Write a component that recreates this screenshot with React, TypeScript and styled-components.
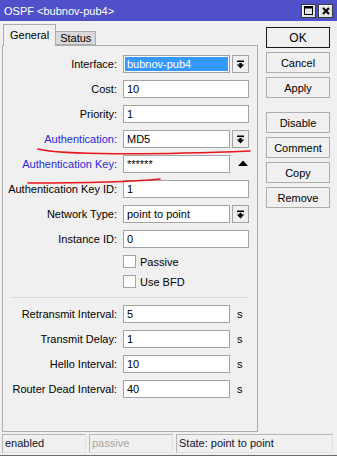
import React from 'react';
import styled, { createGlobalStyle } from 'styled-components';

const GlobalStyle = createGlobalStyle`
  html, body {
    margin: 0;
    padding: 0;
    background: #ffffff;
  }
  body {
    font-family: 'Liberation Sans', Arial, sans-serif;
    font-size: 11px;
    color: #000;
  }
`;

const Window = styled.div`
  position: relative;
  width: 337px;
  height: 455px;
  background: #f0f0f0;
  border-bottom: 1px solid #6b6b6b;
  display: flex;
  flex-direction: column;
`;

const TitleBar = styled.div`
  height: 21px;
  background: #5050c8;
  display: flex;
  align-items: center;
  padding: 0 4px;
  color: #ffffff;
  font-size: 11px;
  flex-shrink: 0;
`;

const TitleText = styled.span`
  line-height: 21px;
  padding-top: 1px;
`;

const TitleButtons = styled.div`
  margin-left: auto;
  display: flex;
  gap: 2px;
`;

const TitleButton = styled.div`
  width: 15px;
  height: 14px;
  box-sizing: border-box;
  background: #e4e4e4;
  border: 1px solid #3a3a3a;
  box-shadow: inset 1px 1px 0 #ffffff;
  display: flex;
  align-items: center;
  justify-content: center;
`;

const Body = styled.div`
  flex: 1;
  display: flex;
  min-height: 0;
`;

const LeftColumn = styled.div`
  display: flex;
  flex-direction: column;
  padding: 3px 0 1px 2px;
  width: 256px;
`;

const TabStrip = styled.div`
  display: flex;
  align-items: flex-end;
  height: 21px;
  margin-left: 1px;
`;

const Tab = styled.div<{ $active: boolean }>`
  box-sizing: border-box;
  height: ${({ $active }) => ($active ? '22px' : '14px')};
  margin-bottom: ${({ $active }) => ($active ? '-1px' : '0')};
  padding: 0 ${({ $active }) => ($active ? '6px' : '4px')};
  background: ${({ $active }) => ($active ? '#f0f0f0' : '#d9d9d9')};
  border: 1px solid #adadad;
  border-bottom: ${({ $active }) => ($active ? 'none' : '1px solid #adadad')};
  border-left: ${({ $active }) => ($active ? '1px solid #adadad' : 'none')};
  position: relative;
  z-index: 1;
  display: flex;
  align-items: center;
  line-height: 12px;
  padding-bottom: ${({ $active }) => ($active ? '2px' : '0')};
`;

const Panel = styled.div`
  flex: 1;
  box-sizing: border-box;
  border: 1px solid #adadad;
  padding: 9px 8px 0 0;
  display: flex;
  flex-direction: column;
`;

const FieldGrid = styled.div`
  display: grid;
  grid-template-columns: 115px 1fr;
  column-gap: 5px;
  row-gap: 7px;
  grid-auto-rows: 18px;
`;

const Label = styled.div<{ $blue?: boolean }>`
  text-align: right;
  padding-right: 1px;
  line-height: 18px;
  white-space: nowrap;
  color: ${({ $blue }) => ($blue ? '#2a2ad8' : '#000000')};
`;

const FieldRow = styled.div`
  display: flex;
  align-items: center;
  gap: 2px;
`;

const Input = styled.div<{ $selected?: boolean }>`
  flex: 1;
  height: 18px;
  box-sizing: border-box;
  border: 1px solid #a3a3a3;
  background: #ffffff;
  padding: 1px;
  display: flex;
`;

const InputText = styled.span<{ $selected?: boolean }>`
  flex: 1;
  padding-left: 2px;
  line-height: 14px;
  background: ${({ $selected }) => ($selected ? '#3399ff' : 'transparent')};
  color: ${({ $selected }) => ($selected ? '#ffffff' : '#000000')};
  white-space: nowrap;
  overflow: hidden;
`;

const DropButton = styled.div`
  width: 17px;
  height: 18px;
  box-sizing: border-box;
  border: 1px solid #a3a3a3;
  background: #f0f0f0;
  display: flex;
  align-items: center;
  justify-content: center;
`;

const PlainArrow = styled.div`
  width: 17px;
  height: 18px;
  display: flex;
  align-items: center;
  justify-content: center;
  padding-left: 4px;
  padding-bottom: 3px;
  box-sizing: border-box;
`;

const Unit = styled.span`
  width: 12px;
  padding-left: 5px;
  line-height: 18px;
`;

const CheckList = styled.div`
  display: flex;
  flex-direction: column;
  gap: 7px;
  margin-top: 7px;
  padding-left: 120px;
`;

const CheckRow = styled.label`
  display: flex;
  align-items: center;
  gap: 4px;
  height: 13px;
`;

const CheckBox = styled.span`
  width: 13px;
  height: 13px;
  box-sizing: border-box;
  border: 1px solid #a3a3a3;
  background: #ffffff;
`;

const Separator = styled.div`
  height: 1px;
  background: #d8d8d8;
  margin: 9px 0 7px 8px;
`;

const ButtonColumn = styled.div`
  display: flex;
  flex-direction: column;
  gap: 4px;
  margin-left: 8px;
  padding-top: 6px;
  width: 64px;
`;

const Button = styled.div<{ $default?: boolean; $spaced?: boolean }>`
  height: 21px;
  box-sizing: border-box;
  border: 1px solid ${({ $default }) => ($default ? '#1a1a1a' : '#adadad')};
  background: #f0f0f0;
  display: flex;
  align-items: center;
  justify-content: center;
  margin-top: ${({ $spaced }) => ($spaced ? '10px' : '0')};
  font-size: ${({ $default }) => ($default ? '12px' : '11px')};
`;

const StatusBar = styled.div`
  display: flex;
  gap: 3px;
  padding: 1px 4px 2px 2px;
  flex-shrink: 0;
`;

const StatusCell = styled.div<{ $width?: number; $muted?: boolean }>`
  box-sizing: border-box;
  height: 19px;
  ${({ $width }) => ($width ? `width: ${$width}px;` : 'flex: 1;')}
  border: 1px solid #b8b8b8;
  border-right-color: #e2e2e2;
  border-bottom-color: #e2e2e2;
  padding-left: 2px;
  line-height: 17px;
  color: ${({ $muted }) => ($muted ? '#a6a6a6' : '#101030')};
  white-space: nowrap;
  overflow: hidden;
`;

const Annotations = styled.svg`
  position: absolute;
  left: 0;
  top: 0;
  pointer-events: none;
  z-index: 5;
`;

const DropIcon = () => (
  <svg width="9" height="9" viewBox="0 0 9 9">
    <rect x="1" y="0.5" width="7" height="1.6" fill="#000" />
    <path d="M3.3 3h2.4v1.6h2.6L4.5 8.4 0.7 4.6h2.6z" fill="#000" />
  </svg>
);

const UpIcon = () => (
  <svg width="10" height="6" viewBox="0 0 10 6">
    <polygon points="0,6 10,6 5,0.5" fill="#000" />
  </svg>
);

const MaximizeIcon = () => (
  <svg width="9" height="9" viewBox="0 0 9 9">
    <rect x="0.5" y="0.5" width="8" height="8" fill="none" stroke="#000" strokeWidth="1" />
    <rect x="0.5" y="0.5" width="8" height="2" fill="#000" />
  </svg>
);

const CloseIcon = () => (
  <svg width="8" height="8" viewBox="0 0 8 8">
    <path d="M1 1L7 7M7 1L1 7" stroke="#000" strokeWidth="2" />
  </svg>
);

type Field = {
  label: string;
  value: string;
  blue?: boolean;
  selected?: boolean;
  trailing?: 'drop' | 'up' | 'unit';
};

const mainFields: Field[] = [
  { label: 'Interface:', value: 'bubnov-pub4', selected: true, trailing: 'drop' },
  { label: 'Cost:', value: '10' },
  { label: 'Priority:', value: '1' },
  { label: 'Authentication:', value: 'MD5', blue: true, trailing: 'drop' },
  { label: 'Authentication Key:', value: '******', blue: true, trailing: 'up' },
  { label: 'Authentication Key ID:', value: '1' },
  { label: 'Network Type:', value: 'point to point', trailing: 'drop' },
  { label: 'Instance ID:', value: '0' },
];

const timerFields: Field[] = [
  { label: 'Retransmit Interval:', value: '5', trailing: 'unit' },
  { label: 'Transmit Delay:', value: '1', trailing: 'unit' },
  { label: 'Hello Interval:', value: '10', trailing: 'unit' },
  { label: 'Router Dead Interval:', value: '40', trailing: 'unit' },
];

const FieldList = ({ fields }: { fields: Field[] }) => (
  <FieldGrid>
    {fields.map((f) => (
      <React.Fragment key={f.label}>
        <Label $blue={f.blue}>{f.label}</Label>
        <FieldRow>
          <Input>
            <InputText $selected={f.selected}>{f.value}</InputText>
          </Input>
          {f.trailing === 'drop' && (
            <DropButton>
              <DropIcon />
            </DropButton>
          )}
          {f.trailing === 'up' && (
            <PlainArrow>
              <UpIcon />
            </PlainArrow>
          )}
          {f.trailing === 'unit' && <Unit>s</Unit>}
        </FieldRow>
      </React.Fragment>
    ))}
  </FieldGrid>
);

export default function App() {
  return (
    <>
      <GlobalStyle />
      <Window>
        <TitleBar>
          <TitleText>OSPF &lt;bubnov-pub4&gt;</TitleText>
          <TitleButtons>
            <TitleButton>
              <MaximizeIcon />
            </TitleButton>
            <TitleButton>
              <CloseIcon />
            </TitleButton>
          </TitleButtons>
        </TitleBar>

        <Body>
          <LeftColumn>
            <TabStrip>
              <Tab $active>General</Tab>
              <Tab $active={false}>Status</Tab>
            </TabStrip>
            <Panel>
              <FieldList fields={mainFields} />
              <CheckList>
                <CheckRow>
                  <CheckBox />
                  Passive
                </CheckRow>
                <CheckRow>
                  <CheckBox />
                  Use BFD
                </CheckRow>
              </CheckList>
              <Separator />
              <FieldList fields={timerFields} />
            </Panel>
          </LeftColumn>

          <ButtonColumn>
            <Button $default>OK</Button>
            <Button>Cancel</Button>
            <Button>Apply</Button>
            <Button $spaced>Disable</Button>
            <Button>Comment</Button>
            <Button>Copy</Button>
            <Button>Remove</Button>
          </ButtonColumn>
        </Body>

        <StatusBar>
          <StatusCell $width={84}>enabled</StatusCell>
          <StatusCell $width={84} $muted>passive</StatusCell>
          <StatusCell>State: point to point</StatusCell>
        </StatusBar>

        <Annotations width="337" height="459" viewBox="0 0 337 459">
          <path
            d="M38 149 C 62 155, 150 155, 250 151"
            fill="none"
            stroke="#e8141e"
            strokeWidth="1.6"
            strokeLinecap="round"
          />
          <path
            d="M28 183 C 70 183, 130 182, 160 179"
            fill="none"
            stroke="#e8141e"
            strokeWidth="1.6"
            strokeLinecap="round"
          />
        </Annotations>
      </Window>
    </>
  );
}
